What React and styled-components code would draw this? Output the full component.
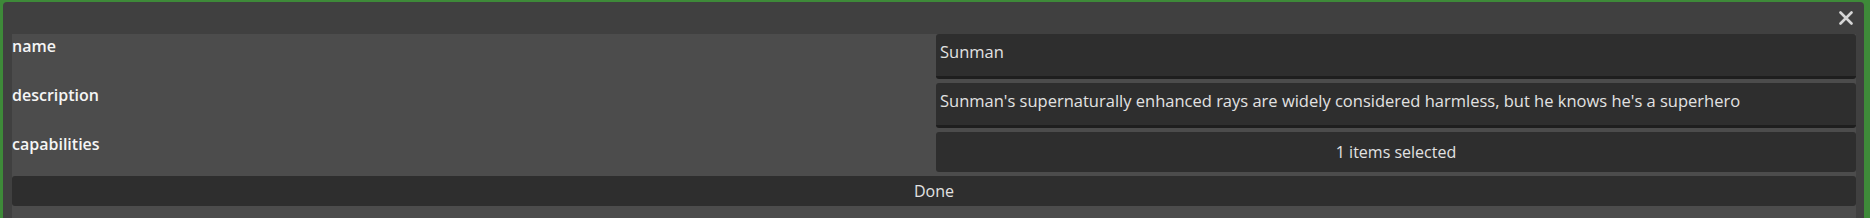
import React from "react";
import styled, { createGlobalStyle } from "styled-components";

const Global = createGlobalStyle`
  html, body { margin: 0; padding: 0; }
  body {
    background: #3e8a39;
    font-family: "Open Sans", "Noto Sans", sans-serif;
    overflow: hidden;
    height: 218px;
  }
`;

const Window = styled.div`
  margin: 2px 6px 0 3px;
  height: 240px;
  background: #404040;
  border-radius: 4px 4px 0 0;
  padding: 0 8px 0 9px;
  display: flex;
  flex-direction: column;
`;

const TitleBar = styled.div`
  height: 32px;
  display: flex;
  align-items: center;
  justify-content: flex-end;
  padding-right: 3px;
`;

const CloseButton = styled.button`
  background: none;
  border: none;
  padding: 0;
  width: 14px;
  height: 14px;
  display: flex;
  align-items: center;
  justify-content: center;
  cursor: pointer;
`;

const Body = styled.div`
  flex: 1;
  background: #4c4c4c;
  display: flex;
  flex-direction: column;
  gap: 4px;
`;

const Form = styled.div`
  display: grid;
  grid-template-columns: 1fr 1fr;
  column-gap: 4px;
  row-gap: 4px;
`;

const Label = styled.div`
  color: #f5f5f5;
  font-size: 16px;
  font-weight: 600;
  line-height: 22px;
  padding-top: 1px;
`;

const Field = styled.div`
  height: 40px;
  background: #2e2e2e;
  border-radius: 3px;
  color: #e2e2e2;
  font-size: 16px;
  line-height: 22px;
  padding: 0 4px;
  display: flex;
  align-items: center;
  justify-content: ${(p) => (p.$center ? "center" : "flex-start")};
  white-space: nowrap;
  overflow: hidden;
`;

const TextInput = styled(Field)`
  height: 35px;
  box-sizing: content-box;
  padding: 7px 4px 0;
  align-items: flex-start;
  border-bottom: 3px solid #1e1e1e;
  font-size: 16.5px;
`;

const DoneButton = styled.button`
  height: 30px;
  width: 100%;
  background: #2e2e2e;
  border: none;
  border-radius: 3px;
  color: #e2e2e2;
  font-family: "Open Sans", "Noto Sans", sans-serif;
  font-size: 16px;
  line-height: 22px;
  padding: 0;
  cursor: pointer;
`;

export default function App() {
  return (
    <>
      <Global />
      <Window>
        <TitleBar>
          <CloseButton aria-label="close">
            <svg width="14" height="14" viewBox="0 0 14 14">
              <path
                d="M1.5 1.5 L12.5 12.5 M12.5 1.5 L1.5 12.5"
                stroke="#d6d6d6"
                strokeWidth="2.6"
                strokeLinecap="round"
              />
            </svg>
          </CloseButton>
        </TitleBar>
        <Body>
          <Form>
            <Label>name</Label>
            <TextInput>Sunman</TextInput>
            <Label>description</Label>
            <TextInput>
              Sunman's supernaturally enhanced rays are widely considered
              harmless, but he knows he's a superhero
            </TextInput>
            <Label>capabilities</Label>
            <Field $center>1 items selected</Field>
          </Form>
          <DoneButton>Done</DoneButton>
        </Body>
      </Window>
    </>
  );
}
